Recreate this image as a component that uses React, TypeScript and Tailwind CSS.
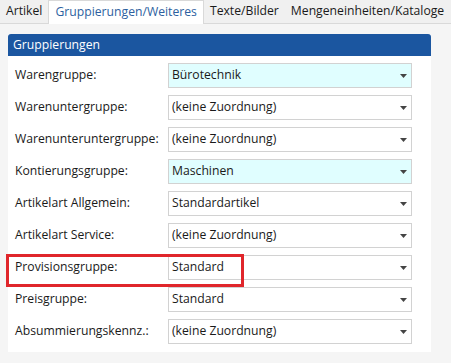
const rows: { label: string; value: string; tint?: boolean }[] = [
  { label: 'Warengruppe:', value: 'Bürotechnik', tint: true },
  { label: 'Warenuntergruppe:', value: '(keine Zuordnung)' },
  { label: 'Warenunteruntergruppe:', value: '(keine Zuordnung)' },
  { label: 'Kontierungsgruppe:', value: 'Maschinen', tint: true },
  { label: 'Artikelart Allgemein:', value: 'Standardartikel' },
  { label: 'Artikelart Service:', value: '(keine Zuordnung)' },
  { label: 'Provisionsgruppe:', value: 'Standard' },
  { label: 'Preisgruppe:', value: 'Standard' },
  { label: 'Absummierungskennz.:', value: '(keine Zuordnung)' },
]

const tabs = ['Artikel', 'Gruppierungen/Weiteres', 'Texte/Bilder', 'Mengeneinheiten/Kataloge']

function Caret() {
  return (
    <svg width="7" height="4" viewBox="0 0 7 4" className="shrink-0">
      <path d="M0 0h7L3.5 4z" fill="#444" />
    </svg>
  )
}

export default function App() {
  return (
    <div
      className="relative w-[451px] h-[363px] overflow-hidden bg-[#f5f5f5] text-[12.2px] text-[#1a1a1a]"
      style={{ fontFamily: '"Open Sans", "Noto Sans", sans-serif' }}
    >
      {/* tabs */}
      <div className="flex h-[24px] items-end bg-[#f0f0f0] border-b border-[#d9d9d9]">
        {tabs.map((t, i) =>
          i === 1 ? (
            <div
              key={t}
              className="h-[24px] -mb-px flex items-center px-[6px] bg-white border-x border-t border-[#d9d9d9] text-[#2d5fa0] whitespace-nowrap"
            >
              {t}
            </div>
          ) : (
            <div key={t} className="h-[23px] flex items-center px-[6px] whitespace-nowrap">
              {t}
            </div>
          )
        )}
      </div>

      {/* panel */}
      <div className="mx-[8px] mt-[10px] w-[423px] bg-white">
        <div className="h-[22px] rounded-t-[3px] bg-[#1b56a0] pl-[5px] flex items-center text-white">
          Gruppierungen
        </div>
        <div className="flex flex-col gap-[7px] pt-[7px] pb-[8px]">
          {rows.map((r) => (
            <div key={r.label} className="flex items-center">
              <div className="w-[160px] pl-[7px] whitespace-nowrap">{r.label}</div>
              <div
                className={`w-[244px] h-[25px] flex items-center justify-between border border-[#d2d2d2] pl-[3px] pr-[4px] ${
                  r.tint ? 'bg-[#e0feff]' : 'bg-white'
                }`}
              >
                <span>{r.value}</span>
                <Caret />
              </div>
            </div>
          ))}
        </div>
      </div>

      {/* highlight annotation */}
      <div className="absolute left-[6px] top-[254px] w-[238px] h-[33px] border-[3px] border-[#e0262b]" />
    </div>
  )
}
